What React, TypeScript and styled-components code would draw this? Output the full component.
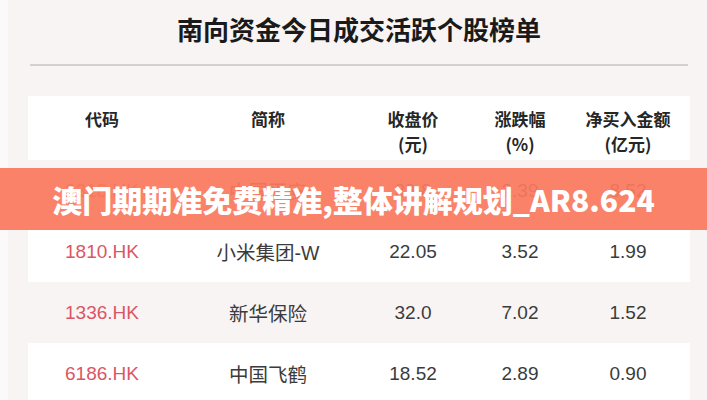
import React from "react";
import styled, { createGlobalStyle } from "styled-components";

const Global = createGlobalStyle`
  html, body { margin: 0; padding: 0; background: #f8f4f4; }
  #root { width: 707px; height: 400px; overflow: hidden; position: relative; }
`;

const Page = styled.div`
  position: relative;
  width: 707px;
  height: 400px;
  box-sizing: border-box;
  border-left: 8px solid #fbf9f9;
  padding: 0 17px 0 20px;
  background: #f8f4f4;
  font-family: "Liberation Sans", "Noto Sans CJK SC", sans-serif;
`;

const Title = styled.h1`
  margin: 0;
  height: 58px;
  line-height: 58px;
  text-align: center;
  font-family: "Noto Sans CJK SC", sans-serif;
  font-size: 26px;
  font-weight: 700;
  color: #1a1a1a;
`;

const Divider = styled.div`
  margin: 6px 2px 0;
  height: 2px;
  background: #d3d0d0;
`;

const Table = styled.div`
  margin-top: 30px;
  display: flex;
  flex-direction: column;
`;

const cols = "148px 184px 106px 108px 108px";

const HeaderRow = styled.div`
  display: grid;
  grid-template-columns: ${cols};
  height: 64px;
  box-sizing: border-box;
  padding-top: 10px;
  background: #ffffff;
`;

const HeaderCell = styled.div`
  text-align: center;
  font-family: "Noto Sans CJK SC", sans-serif;
  font-size: 17px;
  line-height: 25px;
  font-weight: 700;
  color: #262626;
`;

const Row = styled.div<{ $alt: boolean }>`
  display: grid;
  grid-template-columns: ${cols};
  align-items: center;
  height: 61px;
  background: ${(p) => (p.$alt ? "#f8f4f4" : "#ffffff")};
`;

const Cell = styled.div<{ $code?: boolean }>`
  text-align: center;
  font-size: 19px;
  color: ${(p) => (p.$code ? "#dc5563" : "#3b3b3b")};
`;

const NameCell = styled(Cell)`
  font-size: 19.5px;
`;

const Banner = styled.div`
  position: absolute;
  left: -8px;
  top: 168px;
  width: 707px;
  height: 62px;
  background: rgba(250, 120, 94, 0.93);
  display: flex;
  align-items: center;
  justify-content: center;
  color: #ffffff;
  font-family: "Noto Sans CJK SC", sans-serif;
  font-weight: 900;
  font-size: 30px;
`;

const rows = [
  ["2318.HK", "中国平安", "39.8", "2.39", "8.52"],
  ["1810.HK", "小米集团-W", "22.05", "3.52", "1.99"],
  ["1336.HK", "新华保险", "32.0", "7.02", "1.52"],
  ["6186.HK", "中国飞鹤", "18.52", "2.89", "0.90"],
];

export default function App() {
  return (
    <>
      <Global />
      <Page>
        <Title>南向资金今日成交活跃个股榜单</Title>
        <Divider />
        <Table>
          <HeaderRow>
            <HeaderCell>代码</HeaderCell>
            <HeaderCell>简称</HeaderCell>
            <HeaderCell>
              收盘价
              <br />
              (元)
            </HeaderCell>
            <HeaderCell>
              涨跌幅
              <br />
              (%)
            </HeaderCell>
            <HeaderCell>
              净买入金额
              <br />
              (亿元)
            </HeaderCell>
          </HeaderRow>
          {rows.map((r, i) => (
            <Row key={r[0]} $alt={i % 2 === 0}>
              <Cell $code>{r[0]}</Cell>
              <NameCell>{r[1]}</NameCell>
              <Cell>{r[2]}</Cell>
              <Cell>{r[3]}</Cell>
              <Cell>{r[4]}</Cell>
            </Row>
          ))}
        </Table>
        <Banner>澳门期期准免费精准,整体讲解规划_AR8.624</Banner>
      </Page>
    </>
  );
}
